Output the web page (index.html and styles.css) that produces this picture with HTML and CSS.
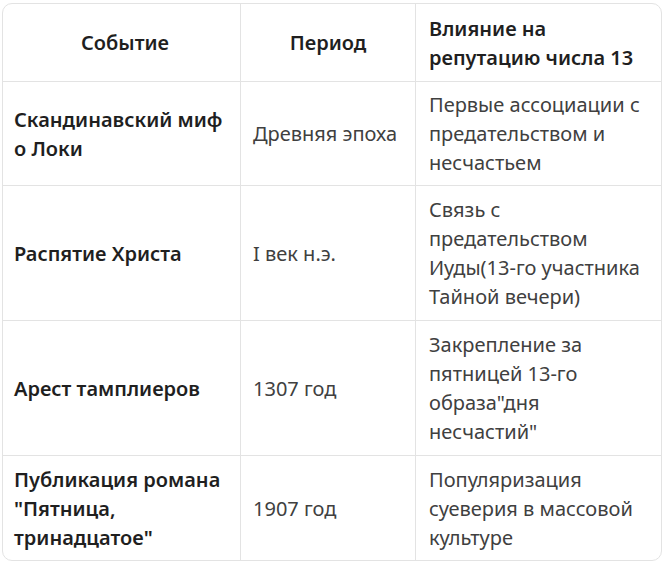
FILE: index.html
```html
<!DOCTYPE html>
<html lang="ru">
<head>
<meta charset="utf-8">
<link rel="stylesheet" href="styles.css">
</head>
<body>
<div class="wrap">
<table class="tbl">
  <thead>
    <tr>
      <th class="c1 center">Событие</th>
      <th class="c2 center">Период</th>
      <th class="c3">Влияние на репутацию числа 13</th>
    </tr>
  </thead>
  <tbody>
    <tr class="r1">
      <td class="ev">Скандинавский миф о&nbsp;Локи</td>
      <td>Древняя эпоха</td>
      <td>Первые ассоциации с предательством и несчастьем</td>
    </tr>
    <tr class="r2">
      <td class="ev">Распятие Христа</td>
      <td>I век н.э.</td>
      <td>Связь с предательством Иуды(13-го участника Тайной вечери)</td>
    </tr>
    <tr class="r3">
      <td class="ev">Арест тамплиеров</td>
      <td>1307 год</td>
      <td>Закрепление за пятницей 13-го образа"дня несчастий"</td>
    </tr>
    <tr class="r4">
      <td class="ev">Публикация романа "Пятница, тринадцатое"</td>
      <td>1907 год</td>
      <td>Популяризация суеверия в массовой культуре</td>
    </tr>
  </tbody>
</table>
</div>
</body>
</html>
```

FILE: styles.css
```css
html, body {
  margin: 0;
  padding: 0;
  background: #ffffff;
}
.wrap {
  padding: 3px 0 0 2px;
}
.tbl {
  width: 660px;
  border-collapse: separate;
  border-spacing: 0;
  border: 1px solid #e3e3e3;
  border-radius: 10px;
  font-family: "Noto Sans", sans-serif;
  font-size: 20px;
  line-height: 29px;
  color: #404040;
  table-layout: fixed;
}
.c1 { width: 238px; }
.c2 { width: 175px; }
.tbl th, .tbl td {
  padding: 6px 12px 6px 12px;
  text-align: left;
  vertical-align: middle;
  border-right: 1px solid #e3e3e3;
  border-bottom: 1px solid #e3e3e3;
  box-sizing: border-box;
}
.tbl th:first-child, .tbl td:first-child {
  padding-left: 11px;
  padding-right: 4px;
}
.tbl th:last-child, .tbl td:last-child {
  border-right: none;
  padding-right: 17px;
  padding-left: 13px;
}
.tbl tbody tr:last-child td { border-bottom: none; }
.tbl th {
  font-weight: 600;
  color: #1f1f1f;
  height: 78px;
}
.tbl th.center { text-align: center; }
.tbl td.ev {
  font-weight: 600;
  color: #1f1f1f;
}
.r1 td { height: 104px; }
.r2 td { height: 135px; }
.r3 td { height: 135px; }
.r4 td { height: 104px; }
```
